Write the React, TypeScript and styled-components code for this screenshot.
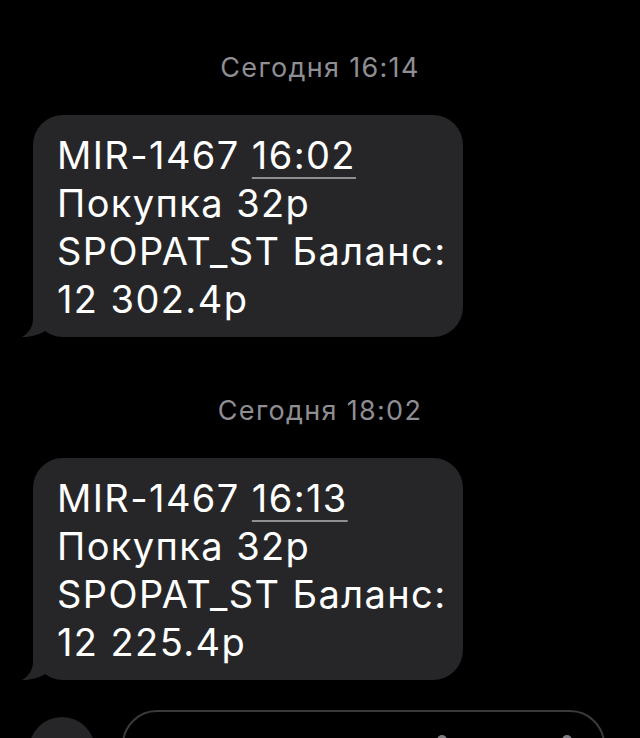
import React from "react";
import styled, { createGlobalStyle } from "styled-components";

const Global = createGlobalStyle`
  html, body {
    margin: 0;
    padding: 0;
    background: #000;
    overflow: hidden;
  }
  body {
    font-family: Inter, "Noto Sans", "Liberation Sans", sans-serif;
    -webkit-font-smoothing: antialiased;
  }
`;

const Page = styled.div`
  display: flex;
  flex-direction: column;
  width: 640px;
  height: 738px;
  background: #000;
  overflow: hidden;
`;

const Timestamp = styled.div<{ $top: number }>`
  margin-top: ${(p) => p.$top}px;
  margin-bottom: 31px;
  text-align: center;
  font-size: 27px;
  line-height: 32px;
  letter-spacing: 1.3px;
  color: #8e8e93;
  font-weight: 400;
`;

const Bubble = styled.div`
  position: relative;
  align-self: flex-start;
  margin-left: 33px;
  width: 430px;
  box-sizing: border-box;
  padding: 16px 10px 14px 24px;
  background: #262628;
  border-radius: 30px;
  color: #fff;
  font-size: 38px;
  line-height: 48px;
  letter-spacing: 1.4px;
`;

const Line = styled.div`
  white-space: nowrap;
`;

const TimeLink = styled.span`
  text-decoration: underline;
  text-decoration-color: #8e8e93;
  text-decoration-thickness: 2px;
  text-underline-offset: 8px;
`;

const Tail = styled.svg`
  position: absolute;
  left: -11px;
  bottom: 0;
  width: 24px;
  height: 30px;
  display: block;
`;

const Composer = styled.div`
  display: flex;
  align-items: flex-start;
  margin-top: 30px;
  padding-left: 29px;
  gap: 27px;
`;

const RoundButton = styled.div`
  margin-top: 7px;
  width: 66px;
  height: 66px;
  border-radius: 50%;
  background: #262628;
  flex-shrink: 0;
`;

const InputField = styled.div`
  width: 483px;
  height: 70px;
  box-sizing: border-box;
  border: 2px solid #3a3a3c;
  border-radius: 36px;
  position: relative;
`;

const Glyph = styled.span<{ $left: number }>`
  position: absolute;
  top: 23px;
  left: ${(p) => p.$left}px;
  width: 10px;
  height: 16px;
  border-radius: 5px;
  background: #7c7c80;
`;

function Message({ time, amount }: { time: string; amount: string }) {
  return (
    <Bubble>
      <Line>
        MIR-1467 <TimeLink>{time}</TimeLink>
      </Line>
      <Line>Покупка 32р</Line>
      <Line>SPOPAT_ST Баланс:</Line>
      <Line>{amount}</Line>
      <Tail viewBox="-11 -30 24 30" aria-hidden>
        <path
          d="M0,-30 L0,-18 C0,-10 -5,-3 -11,0 C-4,0.5 6,-2 12,-6 L12,-30 Z"
          fill="#262628"
        />
      </Tail>
    </Bubble>
  );
}

export default function App() {
  return (
    <>
      <Global />
      <Page>
        <Timestamp $top={52}>Сегодня 16:14</Timestamp>
        <Message time="16:02" amount="12 302.4р" />
        <Timestamp $top={58}>Сегодня 18:02</Timestamp>
        <Message time="16:13" amount="12 225.4р" />
        <Composer>
          <RoundButton />
          <InputField>
            <Glyph $left={313} />
            <Glyph $left={438} />
          </InputField>
        </Composer>
      </Page>
    </>
  );
}
